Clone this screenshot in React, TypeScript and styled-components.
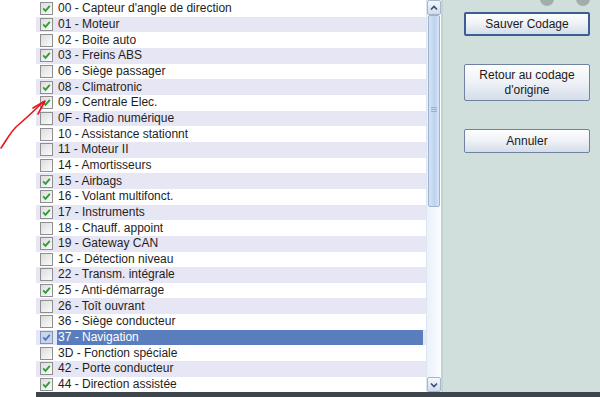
import styled, { createGlobalStyle } from "styled-components";

const GlobalStyle = createGlobalStyle`
  html, body {
    margin: 0;
    padding: 0;
    background: #ffffff;
  }
  body {
    font-family: "Liberation Sans", Arial, sans-serif;
  }
`;

type Item = { code: string; label: string; checked: boolean; selected?: boolean };

const items: Item[] = [
  { code: "00", label: "Capteur d'angle de direction", checked: true },
  { code: "01", label: "Moteur", checked: true },
  { code: "02", label: "Boite auto", checked: false },
  { code: "03", label: "Freins ABS", checked: true },
  { code: "06", label: "Siège passager", checked: false },
  { code: "08", label: "Climatronic", checked: true },
  { code: "09", label: "Centrale Elec.", checked: true },
  { code: "0F", label: "Radio numérique", checked: false },
  { code: "10", label: "Assistance stationnt", checked: false },
  { code: "11", label: "Moteur II", checked: false },
  { code: "14", label: "Amortisseurs", checked: false },
  { code: "15", label: "Airbags", checked: true },
  { code: "16", label: "Volant multifonct.", checked: true },
  { code: "17", label: "Instruments", checked: true },
  { code: "18", label: "Chauff. appoint", checked: false },
  { code: "19", label: "Gateway CAN", checked: true },
  { code: "1C", label: "Détection niveau", checked: false },
  { code: "22", label: "Transm. intégrale", checked: false },
  { code: "25", label: "Anti-démarrage", checked: true },
  { code: "26", label: "Toît ouvrant", checked: false },
  { code: "36", label: "Siège conducteur", checked: false },
  { code: "37", label: "Navigation", checked: true, selected: true },
  { code: "3D", label: "Fonction spéciale", checked: false },
  { code: "42", label: "Porte conducteur", checked: true },
  { code: "44", label: "Direction assistée", checked: true },
];

const Screen = styled.div`
  position: relative;
  display: flex;
  width: 600px;
  height: 397px;
  overflow: hidden;
  background: #ffffff;
`;

const Gutter = styled.div`
  width: 36px;
  flex: none;
  background: #ffffff;
`;

const Main = styled.div`
  flex: 1;
  display: flex;
  flex-direction: column;
`;

const Body = styled.div`
  display: flex;
  height: 392px;
  flex: none;
`;

const BottomBar = styled.div`
  flex: 1;
  background: #3e464d;
`;

const List = styled.div`
  width: 390px;
  display: flex;
  flex-direction: column;
  padding-top: 1px;
  overflow: hidden;
  background: #ffffff;
`;

const Row = styled.div<{ $odd: boolean }>`
  height: 15.67px;
  flex: none;
  display: flex;
  align-items: center;
  padding: 0 3px 0 4px;
  background: ${(p) => (p.$odd ? "#e7e6f4" : "#ffffff")};
`;

const Box = styled.span<{ $dim?: boolean }>`
  width: 11px;
  height: 11px;
  flex: none;
  border: 1px solid ${(p) => (p.$dim ? "#7f93b6" : "#8e8f8f")};
  background: ${(p) => (p.$dim ? "#c9d6ea" : "linear-gradient(135deg, #dcdcdc, #fbfbfb)")};
  display: flex;
  align-items: center;
  justify-content: center;
`;

const Label = styled.span<{ $selected?: boolean }>`
  flex: 1;
  margin-left: 4px;
  padding-left: 1px;
  height: 15px;
  line-height: 15px;
  font-size: 12px;
  white-space: nowrap;
  color: ${(p) => (p.$selected ? "#ffffff" : "#1e1e1e")};
  background: ${(p) => (p.$selected ? "#5a7dbd" : "transparent")};
`;

const Scrollbar = styled.div`
  width: 14px;
  flex: none;
  display: flex;
  flex-direction: column;
  background: linear-gradient(90deg, #e9f1fa, #fbfdff);
  border-left: 1px solid #dde6f0;
  border-right: 1px solid #c6d3d8;
`;

const ArrowButton = styled.div`
  height: 15px;
  flex: none;
  display: flex;
  align-items: center;
  justify-content: center;
  border: 1px solid #a6b6cc;
  border-radius: 2px;
  background: linear-gradient(180deg, #f4f8fd, #cfdcec);
  box-sizing: border-box;
`;

const Thumb = styled.div`
  height: 192px;
  flex: none;
  margin: 0 1px;
  border: 1px solid #9fb3cc;
  border-radius: 2px;
  background: linear-gradient(90deg, #d2e3f6, #bcd4ee 60%, #d8e7f7);
  display: flex;
  align-items: center;
  justify-content: center;
  box-sizing: border-box;
`;

const Grip = styled.div`
  width: 6px;
  height: 6px;
  background: repeating-linear-gradient(180deg, #9aaec6 0 1px, transparent 1px 2px);
  margin-top: -2px;
`;

const Track = styled.div`
  flex: 1;
`;

const Panel = styled.div`
  flex: 1;
  background: #d1dfdc;
  border-left: 1px solid #c3d2cf;
  padding: 12px 0 0 21px;
  display: flex;
  flex-direction: column;
  position: relative;
`;

const Button = styled.button<{ $default?: boolean; $tall?: boolean }>`
  width: 126px;
  height: ${(p) => (p.$tall ? "37px" : "24px")};
  margin-bottom: 28px;
  box-sizing: border-box;
  font-family: "Liberation Sans", Arial, sans-serif;
  font-size: 12px;
  line-height: 15px;
  color: #1a1a1a;
  padding: 0;
  border: ${(p) => (p.$default ? "2px solid #3c5d96" : "1px solid #6f82a2")};
  border-radius: 2px;
  background: linear-gradient(180deg, #fdfdfe 0%, #eef1f6 50%, #d5dde9 100%);
`;

const TitleDots = styled.div`
  position: absolute;
  top: -8px;
  right: 10px;
  display: flex;
  gap: 22px;
  z-index: 1;
`;

const Dot = styled.span`
  width: 14px;
  height: 14px;
  border-radius: 50%;
  background: #a3adac;
`;

const Arrow = styled.svg`
  position: absolute;
  left: 0;
  top: 96px;
`;

const Check = ({ color }: { color: string }) => (
  <svg width="9" height="9" viewBox="0 0 9 9">
    <path d="M1.2 4.4 L3.5 6.8 L7.8 1.8" fill="none" stroke={color} strokeWidth="1.8" />
  </svg>
);

const Chevron = ({ down }: { down?: boolean }) => (
  <svg width="8" height="6" viewBox="0 0 8 6">
    <path
      d={down ? "M1 1.5 L4 4.5 L7 1.5" : "M1 4.5 L4 1.5 L7 4.5"}
      fill="none"
      stroke="#3b4d6d"
      strokeWidth="1.6"
    />
  </svg>
);

export default function App() {
  return (
    <Screen>
      <GlobalStyle />
      <Gutter />
      <Main>
        <Body>
          <List>
            {items.map((it, i) => (
              <Row key={it.code} $odd={i % 2 === 1}>
                <Box $dim={it.selected}>
                  {it.checked && <Check color={it.selected ? "#4f78b8" : "#2f9a36"} />}
                </Box>
                <Label $selected={it.selected}>
                  {it.code} - {it.label}
                </Label>
              </Row>
            ))}
          </List>
          <Scrollbar>
            <ArrowButton>
              <Chevron />
            </ArrowButton>
            <Thumb>
              <Grip />
            </Thumb>
            <Track />
            <ArrowButton>
              <Chevron down />
            </ArrowButton>
          </Scrollbar>
          <Panel>
            <TitleDots>
              <Dot />
              <Dot />
            </TitleDots>
            <Button $default>Sauver Codage</Button>
            <Button $tall>
              Retour au codage
              <br />
              d'origine
            </Button>
            <Button>Annuler</Button>
          </Panel>
        </Body>
        <BottomBar />
      </Main>
      <Arrow width="50" height="60" viewBox="0 0 50 60">
        <path
          d="M1 52 C6 45 10 37 16 31 C24 24 32 17 43 6"
          fill="none"
          stroke="#e8141c"
          strokeWidth="1.6"
          strokeLinecap="round"
        />
        <path
          d="M33 12 L45 5 L38 18"
          fill="none"
          stroke="#e8141c"
          strokeWidth="1.6"
          strokeLinecap="round"
          strokeLinejoin="round"
        />
      </Arrow>
    </Screen>
  );
}
